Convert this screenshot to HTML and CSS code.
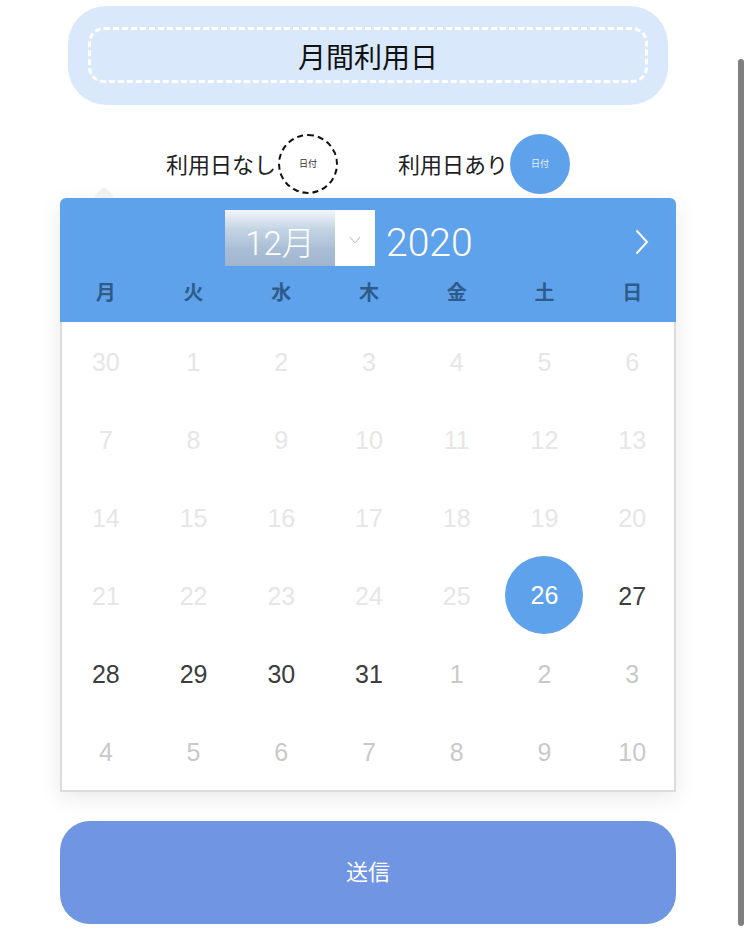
FILE: index.html
```html
<!DOCTYPE html>
<html lang="ja">
<head>
<meta charset="utf-8">
<title>月間利用日</title>
<link rel="stylesheet" href="styles.css">
</head>
<body>
<div class="page">
  <div class="title-box">
    <div class="title-inner">月間利用日</div>
  </div>

  <div class="legend">
    <div class="legend-item">
      <span class="legend-label">利用日なし</span>
      <span class="dot dot-empty">日付</span>
    </div>
    <div class="legend-item">
      <span class="legend-label">利用日あり</span>
      <span class="dot dot-filled">日付</span>
    </div>
  </div>

  <div class="calendar">
    <div class="cal-arrow"></div>
    <div class="cal-head">
      <div class="cal-nav">
        <div class="month-select">
          <span class="month-val">12月</span>
          <span class="month-caret">
            <svg width="12" height="8" viewBox="0 0 12 8"><polyline points="1,1 6,7 11,1" fill="none" stroke="#b8b8b8" stroke-width="1"/></svg>
          </span>
        </div>
        <span class="year">2020</span>
        <span class="next">
          <svg width="14" height="26" viewBox="0 0 14 26"><polyline points="1.5,1.5 12,13 1.5,24.5" fill="none" stroke="#ffffff" stroke-width="2"/></svg>
        </span>
      </div>
      <div class="weekdays">
        <span>月</span><span>火</span><span>水</span><span>木</span><span>金</span><span>土</span><span>日</span>
      </div>
    </div>
    <div class="cal-body">
      <span class="d past">30</span><span class="d past">1</span><span class="d past">2</span><span class="d past">3</span><span class="d past">4</span><span class="d past">5</span><span class="d past">6</span>
      <span class="d past">7</span><span class="d past">8</span><span class="d past">9</span><span class="d past">10</span><span class="d past">11</span><span class="d past">12</span><span class="d past">13</span>
      <span class="d past">14</span><span class="d past">15</span><span class="d past">16</span><span class="d past">17</span><span class="d past">18</span><span class="d past">19</span><span class="d past">20</span>
      <span class="d past">21</span><span class="d past">22</span><span class="d past">23</span><span class="d past">24</span><span class="d past">25</span><span class="d"><span class="sel">26</span></span><span class="d cur">27</span>
      <span class="d cur">28</span><span class="d cur">29</span><span class="d cur">30</span><span class="d cur">31</span><span class="d next-m">1</span><span class="d next-m">2</span><span class="d next-m">3</span>
      <span class="d next-m">4</span><span class="d next-m">5</span><span class="d next-m">6</span><span class="d next-m">7</span><span class="d next-m">8</span><span class="d next-m">9</span><span class="d next-m">10</span>
    </div>
  </div>

  <button class="submit" type="button">送信</button>
</div>
<div class="scrollbar"></div>
</body>
</html>
```

FILE: styles.css
```css
html, body {
  margin: 0;
  padding: 0;
  background: #ffffff;
}
body {
  width: 750px;
  height: 937px;
  overflow: hidden;
  position: relative;
  font-family: "Noto Sans CJK JP", "Noto Sans", sans-serif;
}
.page {
  width: 616px;
  margin-left: 60px;
  padding-top: 6px;
  display: flex;
  flex-direction: column;
  align-items: center;
}
.title-box {
  width: 600px;
  height: 99px;
  box-sizing: border-box;
  background: #d9e8fb;
  border-radius: 38px;
  padding: 21px 20px 22px 20px;
}
.title-inner {
  height: 56px;
  box-sizing: border-box;
  border: 3px dashed #ffffff;
  border-radius: 16px;
  display: flex;
  align-items: center;
  justify-content: center;
  font-size: 28px;
  color: #111111;
  line-height: 1;
  padding-top: 2px;
}
.legend {
  display: flex;
  gap: 60px;
  margin-top: 28px;
  height: 61px;
  align-items: center;
  padding-left: 0;
}
.legend-item {
  display: flex;
  align-items: center;
  gap: 2px;
}
.legend-label {
  font-size: 22px;
  color: #222222;
  line-height: 1;
  margin-top: -2px;
}
.dot {
  width: 60px;
  height: 60px;
  border-radius: 50%;
  box-sizing: border-box;
  display: flex;
  align-items: center;
  justify-content: center;
  font-size: 9px;
  line-height: 1;
}
.dot-empty {
  border: 2px dashed #111111;
  color: #333333;
}
.dot-filled {
  background: #5fa2ec;
  color: #e8f1fc;
}
.calendar {
  width: 616px;
  margin-top: 4px;
  position: relative;
  box-shadow: 0 6px 22px rgba(0, 0, 0, 0.09);
  border-radius: 6px 6px 0 0;
}
.cal-arrow {
  position: absolute;
  left: 35px;
  top: -9px;
  width: 0;
  height: 0;
  border-left: 9px solid transparent;
  border-right: 9px solid transparent;
  border-bottom: 9px solid #f1f1f1;
  filter: drop-shadow(0 -1px 1px rgba(0,0,0,0.1));
}
.cal-head {
  background: #5fa2ec;
  border-radius: 6px 6px 0 0;
  height: 124px;
  box-sizing: border-box;
  padding-top: 12px;
}
.cal-nav {
  height: 56px;
  display: flex;
  align-items: center;
  padding-left: 165px;
  position: relative;
}
.month-select {
  display: flex;
  width: 150px;
  height: 56px;
}
.month-val {
  width: 110px;
  height: 56px;
  background: linear-gradient(to bottom, #f2f6fb 0%, #c3d3e4 35%, #a9bed5 70%, #a0b6cf 100%);
  color: #ffffff;
  font-family: "Roboto", "Noto Sans CJK JP", sans-serif;
  font-weight: 300;
  font-size: 33px;
  line-height: 56px;
  text-align: center;
  padding-left: 0;
  padding-top: 6px;
  box-sizing: border-box;
}
.month-caret {
  width: 40px;
  background: #ffffff;
  display: flex;
  align-items: center;
  justify-content: center;
  padding-top: 4px;
  box-sizing: border-box;
}
.year {
  margin-left: 11px;
  color: #ffffff;
  font-family: "Roboto", sans-serif;
  font-weight: 300;
  font-size: 39px;
  line-height: 56px;
  padding-top: 10px;
}
.next {
  position: absolute;
  right: 27px;
  top: 19px;
  display: flex;
}
.weekdays {
  display: grid;
  grid-template-columns: repeat(7, 1fr);
  padding-left: 2px;
  height: 50px;
  align-items: center;
}
.weekdays span {
  text-align: center;
  font-size: 20px;
  font-weight: 700;
  color: #2e5b8a;
  line-height: 1;
  padding-top: 2px;
}
.cal-body {
  background: #ffffff;
  box-shadow: inset 2px 0 0 #dcdcdc, inset -2px 0 0 #dcdcdc, inset 0 -2px 0 #dcdcdc;
  display: grid;
  grid-template-columns: repeat(7, 1fr);
  padding-left: 2px;
  grid-auto-rows: 78px;
  height: 470px;
  box-sizing: border-box;
}
.d {
  display: flex;
  align-items: center;
  justify-content: center;
  font-family: "Liberation Sans", "Roboto", sans-serif;
  font-size: 25px;
  line-height: 1;
  padding-top: 2px;
}
.past { color: #e6e6e6; }
.next-m { color: #c9c9c9; }
.cur { color: #3d3d3d; }
.sel {
  width: 78px;
  height: 78px;
  border-radius: 50%;
  background: #5fa2ec;
  color: #ffffff;
  display: flex;
  align-items: center;
  justify-content: center;
  margin-top: -2px;
}
.submit {
  margin-top: 29px;
  width: 616px;
  height: 103px;
  border: none;
  border-radius: 30px;
  background: #6f95e3;
  color: #ffffff;
  font-family: "Noto Sans CJK JP", sans-serif;
  font-size: 22px;
  padding: 0 0 6px 0;
}
.scrollbar {
  position: absolute;
  left: 738px;
  top: 59px;
  width: 6px;
  height: 867px;
  border-radius: 3px;
  background: #808080;
}
```
